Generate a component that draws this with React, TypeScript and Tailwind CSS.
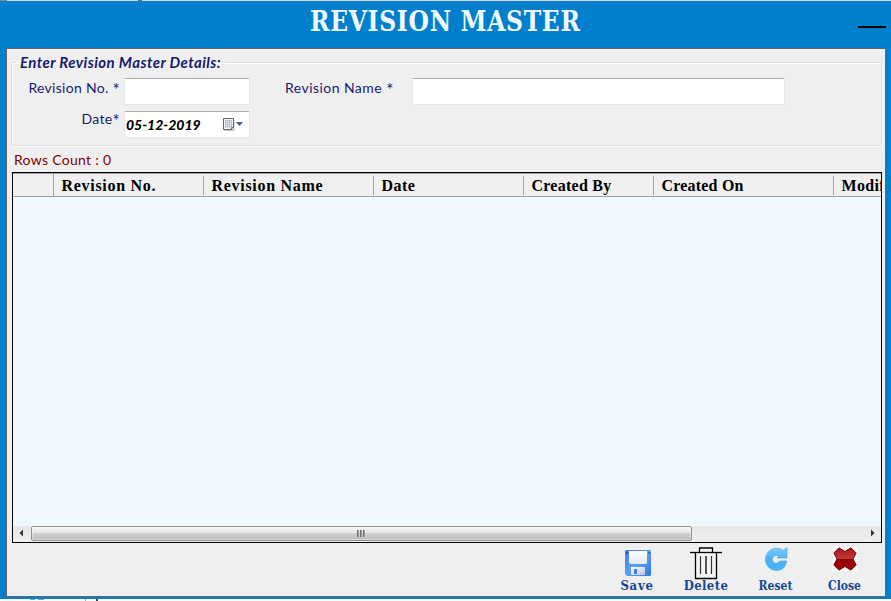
import React from "react";

const sans = "font-['Lato','Open_Sans',sans-serif] whitespace-nowrap";
const serif = "font-['Liberation_Serif',serif] font-bold whitespace-nowrap";

const columns = [
  { label: "", width: "w-[41px]", rule: "h-[23px]", text: "" },
  { label: "Revision No.", width: "w-[150px]", rule: "h-[19px] mt-[2px]", text: "tracking-[0.7px]" },
  { label: "Revision Name", width: "w-[170px]", rule: "h-[19px] mt-[2px]", text: "tracking-[0.7px]" },
  { label: "Date", width: "w-[150px]", rule: "h-[19px] mt-[2px]", text: "tracking-[0.45px]" },
  { label: "Created By", width: "w-[130px]", rule: "h-[19px] mt-[2px]", text: "tracking-[0.25px]" },
  { label: "Created On", width: "w-[180px]", rule: "h-[19px] mt-[2px]", text: "tracking-[0.2px]" },
  { label: "Modified By", width: "w-[150px]", rule: "h-[19px] mt-[2px]", text: "tracking-[0.3px]" },
];

function CalendarIcon() {
  return (
    <svg width="22" height="16" viewBox="0 0 22 16" className="block">
      <path d="M2 3.5h10.500v10.500H2z" fill="#c8c4c2" />
      <path d="M1.500 1.500h10v9l-2 2h-8z" fill="#f4f5fa" stroke="#6b6260" />
      <path d="M3 3.500h7M3 5.500h7M3 7.500h7M3 9.500h7M3.500 3v8M5.500 3v8M7.500 3v8M9.500 3v7" stroke="#a9b2c6" strokeWidth=".7" />
      <path d="M9.500 12.500v-2h2" fill="#fff" stroke="#6b6260" />
      <path d="M14 5h7l-3.500 4z" fill="#45608c" />
    </svg>
  );
}

function SaveIcon() {
  return (
    <svg width="26" height="26" viewBox="0 0 26 26" className="block">
      <defs>
        <linearGradient id="disk" x2="1" y2="1"><stop stopColor="#3e7fdf" /><stop offset=".5" stopColor="#5c9df5" /><stop offset="1" stopColor="#3278e0" /></linearGradient>
        <linearGradient id="paper" x2="0" y2="1"><stop stopColor="#fff" /><stop offset="1" stopColor="#dfe9f6" /></linearGradient>
        <linearGradient id="metal" x2="1" y2="1"><stop stopColor="#fff" /><stop offset="1" stopColor="#b4c4dc" /></linearGradient>
      </defs>
      <path d="M1 0h24l1 1v24l-1 1H2l-2-2V1z" fill="url(#disk)" />
      <path d="M4 1h18v12l-1 1H5l-1-1z" fill="url(#paper)" />
      <path d="M1.500 2h1.500v1.500h-1.500zM23.500 2h1.500v1.500h-1.500z" fill="#16418b" />
      <path d="M6 17h14v8H6z" fill="url(#metal)" />
      <path d="M9 19h3v5H9z" fill="#3d7de0" />
    </svg>
  );
}

function DeleteIcon() {
  return (
    <svg width="32" height="33" viewBox="0 0 32 33" fill="none" className="block">
      <path d="M5.500 5v26.500h21V5" fill="#f3f3f3" stroke="#000" strokeWidth="1.300" />
      <path d="M9.500 5V1h13v4" fill="#f3f3f3" stroke="#000" strokeWidth="1.300" />
      <path d="M0 5.500h32" stroke="#000" strokeWidth="1.300" />
      <path d="M10.500 9v18M21.500 9v18" stroke="#333" strokeWidth="1.200" />
      <path d="M16 9v18" stroke="#555" strokeWidth="2" />
    </svg>
  );
}

function ResetIcon() {
  return (
    <svg width="23" height="24" viewBox="0 0 23 24" className="block">
      <defs><linearGradient id="reset" x2="0" y2="1"><stop stopColor="#82cdfa" /><stop offset=".5" stopColor="#4eb1f1" /><stop offset="1" stopColor="#48b4f6" /></linearGradient></defs>
      <path d="M18.500 3.500L22 .5V11H12L14 9C11 7.500 7.500 9 7.500 12.500 7.500 16.500 12 18 14.500 14H21.500C21 20 17 23.500 11.500 23.500 5.500 23.500 .5 19 .5 12.500 .5 3 11 -2 18.500 3.500Z" fill="url(#reset)" stroke="#47a9e8" strokeWidth=".7" />
    </svg>
  );
}

function CloseIcon() {
  return (
    <svg width="24" height="24" viewBox="0 0 24 24" className="block bg-white">
      <defs><linearGradient id="cross" x2="0" y2="1"><stop stopColor="#a91518" /><stop offset=".48" stopColor="#bd383b" /><stop offset=".52" stopColor="#920003" /><stop offset="1" stopColor="#a60508" /></linearGradient></defs>
      <path d="M6 .8L12 4.500l6-3.700L23.200 6 20 12l3.200 6-5.200 5.200-6-3.700-6 3.700L.8 18 4 12 .8 6z" fill="url(#cross)" stroke="#78070a" strokeLinejoin="round" />
    </svg>
  );
}

function Required() {
  return <span className="align-[-3px] text-[17px] leading-[10px]">*</span>;
}

function Action({ label, icon, width, text }: { label: string; icon: React.ReactNode; width: string; text: string }) {
  return (
    <button className={`flex h-[48px] flex-col items-center ${width}`}>
      <span className="flex h-[32px] items-start justify-center">{icon}</span>
      <span className={`font-['DejaVu_Serif_Condensed','DejaVu_Serif',serif] font-bold leading-[14px] text-[#174694] whitespace-nowrap ${text}`}>{label}</span>
    </button>
  );
}

const field = "rounded-[2px] border border-[#e2e5ec] border-t-[#abadb3] bg-white";

export default function App() {
  return (
    <div className="flex h-[601px] w-[891px] flex-col overflow-hidden bg-[#007fcd]">
      <div className="flex h-px shrink-0 bg-[#d2dbe5]">
        <div className="w-[7px] bg-[#808790]" /><div className="ml-[131px] w-[4px] bg-[#59677a]" />
      </div>
      <header className="flex h-[47px] shrink-0">
        <div className="w-[310px]" />
        <h1 className="w-[548px] origin-left scale-x-[0.93] whitespace-nowrap pt-[3px] font-['DejaVu_Serif_Condensed','DejaVu_Serif',serif] text-[28px] font-bold leading-[36px] tracking-[0.75px] text-[#f0f8ff]">REVISION MASTER</h1>
        <button aria-label="Minimize" className="mt-[25px] h-[2px] w-[28px] bg-black" />
      </header>

      <main className="ml-[6px] flex h-[549px] w-[880px] shrink-0 flex-col border border-[#666] bg-[#efefef]">
        <fieldset className="ml-[4px] mt-[4px] h-[93px] w-[871px] rounded-[3px] border border-[#d5dfe5] px-0 shadow-[inset_1px_1px_0_#fff,1px_1px_0_#fff]">
          <legend className={`${sans} ml-[4px] h-[18px] px-[4px] text-[15px] font-bold italic leading-[18px] tracking-[0.42px] text-[#191970]`}>Enter Revision Master Details:</legend>
          <div className={`${sans} flex h-[39px] pt-[7px] text-[14px] text-[#191970]`}>
            <label className="w-[108px] pt-px text-right leading-[18px] tracking-[0.3px]">Revision No. <Required /></label>
            <div className={`${field} ml-[4px] h-[27px] w-[126px]`} />
            <label className="ml-[35px] w-[127px] pt-px leading-[18px] tracking-[0.45px]">Revision Name <Required /></label>
            <div className={`${field} h-[27px] w-[373px]`} />
          </div>
          <div className={`${sans} flex text-[14px] text-[#191970]`}>
            <label className="w-[108px] text-right leading-[18px] tracking-[0.3px]">Date<Required /></label>
            <div className={`${field} ml-[4px] mt-px flex h-[27px] w-[126px]`}>
              <span className="w-[97px] pl-px pt-[4px] text-[14px] font-black italic leading-[18px] text-black">05-12-2019</span>
              <span className="pt-[5px]"><CalendarIcon /></span>
            </div>
          </div>
        </fieldset>
        <p className={`${sans} ml-[7px] mt-[5px] h-[21px] text-[14px] leading-[18px] tracking-[0.3px] text-[#800000]`}>Rows Count : 0</p>

        <section className="ml-[5px] flex h-[371px] w-[870px] shrink-0 flex-col border border-black bg-[#f0f8ff]">
          <div className="flex h-[24px] w-full shrink-0 overflow-hidden border-b border-t border-[#a0a0a0] bg-[#efefef]">
            {columns.map((c, i) => (
              <div key={i} className={`flex shrink-0 ${c.width}`}>
                <span className={`${serif} flex-1 pl-[7.5px] pt-[3px] text-[16px] leading-[18px] text-black ${c.text}`}>{c.label}</span>
                <span className={`w-px bg-[#a0a0a0] ${c.rule}`} />
              </div>
            ))}
          </div>
          <div className="flex-1" />
          <div className="flex h-[16px] shrink-0 bg-gradient-to-b from-[#e6e6e6] to-[#f0f0f0]">
            <div className="flex w-[18px] items-start pl-[6px] pt-[3px]"><svg width="5" height="8"><path d="M4 .5v7L.500 4z" fill="#333" /></svg></div>
            <div className="flex h-[15px] w-[661px] justify-center rounded-[2px] border border-[#929292] bg-[linear-gradient(#f5f5f5,#e7e7e7_45%,#d0d0d2_50%,#bdbdc0)] pr-[2px] pt-[3px] shadow-[inset_0_0_0_1px_#ffffff66]">
              <div className="flex h-[7px] gap-px"><i className="w-[2px] bg-gradient-to-r from-[#555] to-[#bbb]" /><i className="w-[2px] bg-gradient-to-r from-[#555] to-[#bbb]" /><i className="w-[2px] bg-gradient-to-r from-[#555] to-[#bbb]" /></div>
            </div>
            <div className="flex flex-1 items-start justify-end pr-[6px] pt-[3px]"><svg width="5" height="8"><path d="M1 .5v7L4.500 4z" fill="#333" /></svg></div>
          </div>
        </section>

        <footer className="ml-[600px] flex pt-[4px]">
          <Action label="Save" width="w-[60px]" text="text-[13px] tracking-[0.7px]" icon={<span className="pl-[2px] pt-[3px]"><SaveIcon /></span>} />
          <Action label="Delete" width="w-[78px]" text="text-[13px] tracking-[0.4px]" icon={<span><DeleteIcon /></span>} />
          <Action label="Reset" width="w-[61px]" text="text-[12px]" icon={<span className="pl-px"><ResetIcon /></span>} />
          <Action label="Close" width="w-[77px]" text="text-[12px]" icon={<CloseIcon />} />
        </footer>
      </main>

      <div className="mt-[2px] flex h-[2px] shrink-0 bg-white">
        <div className="ml-[30px] h-px w-[5px] bg-[#4fb0d6]" /><div className="ml-[3px] h-px w-[6px] bg-[#4fb0d6]" />
        <div className="ml-[41px] w-px bg-[#8fa8bd]" /><div className="ml-[10px] w-[2px] bg-[#404047]" />
      </div>
    </div>
  );
}
